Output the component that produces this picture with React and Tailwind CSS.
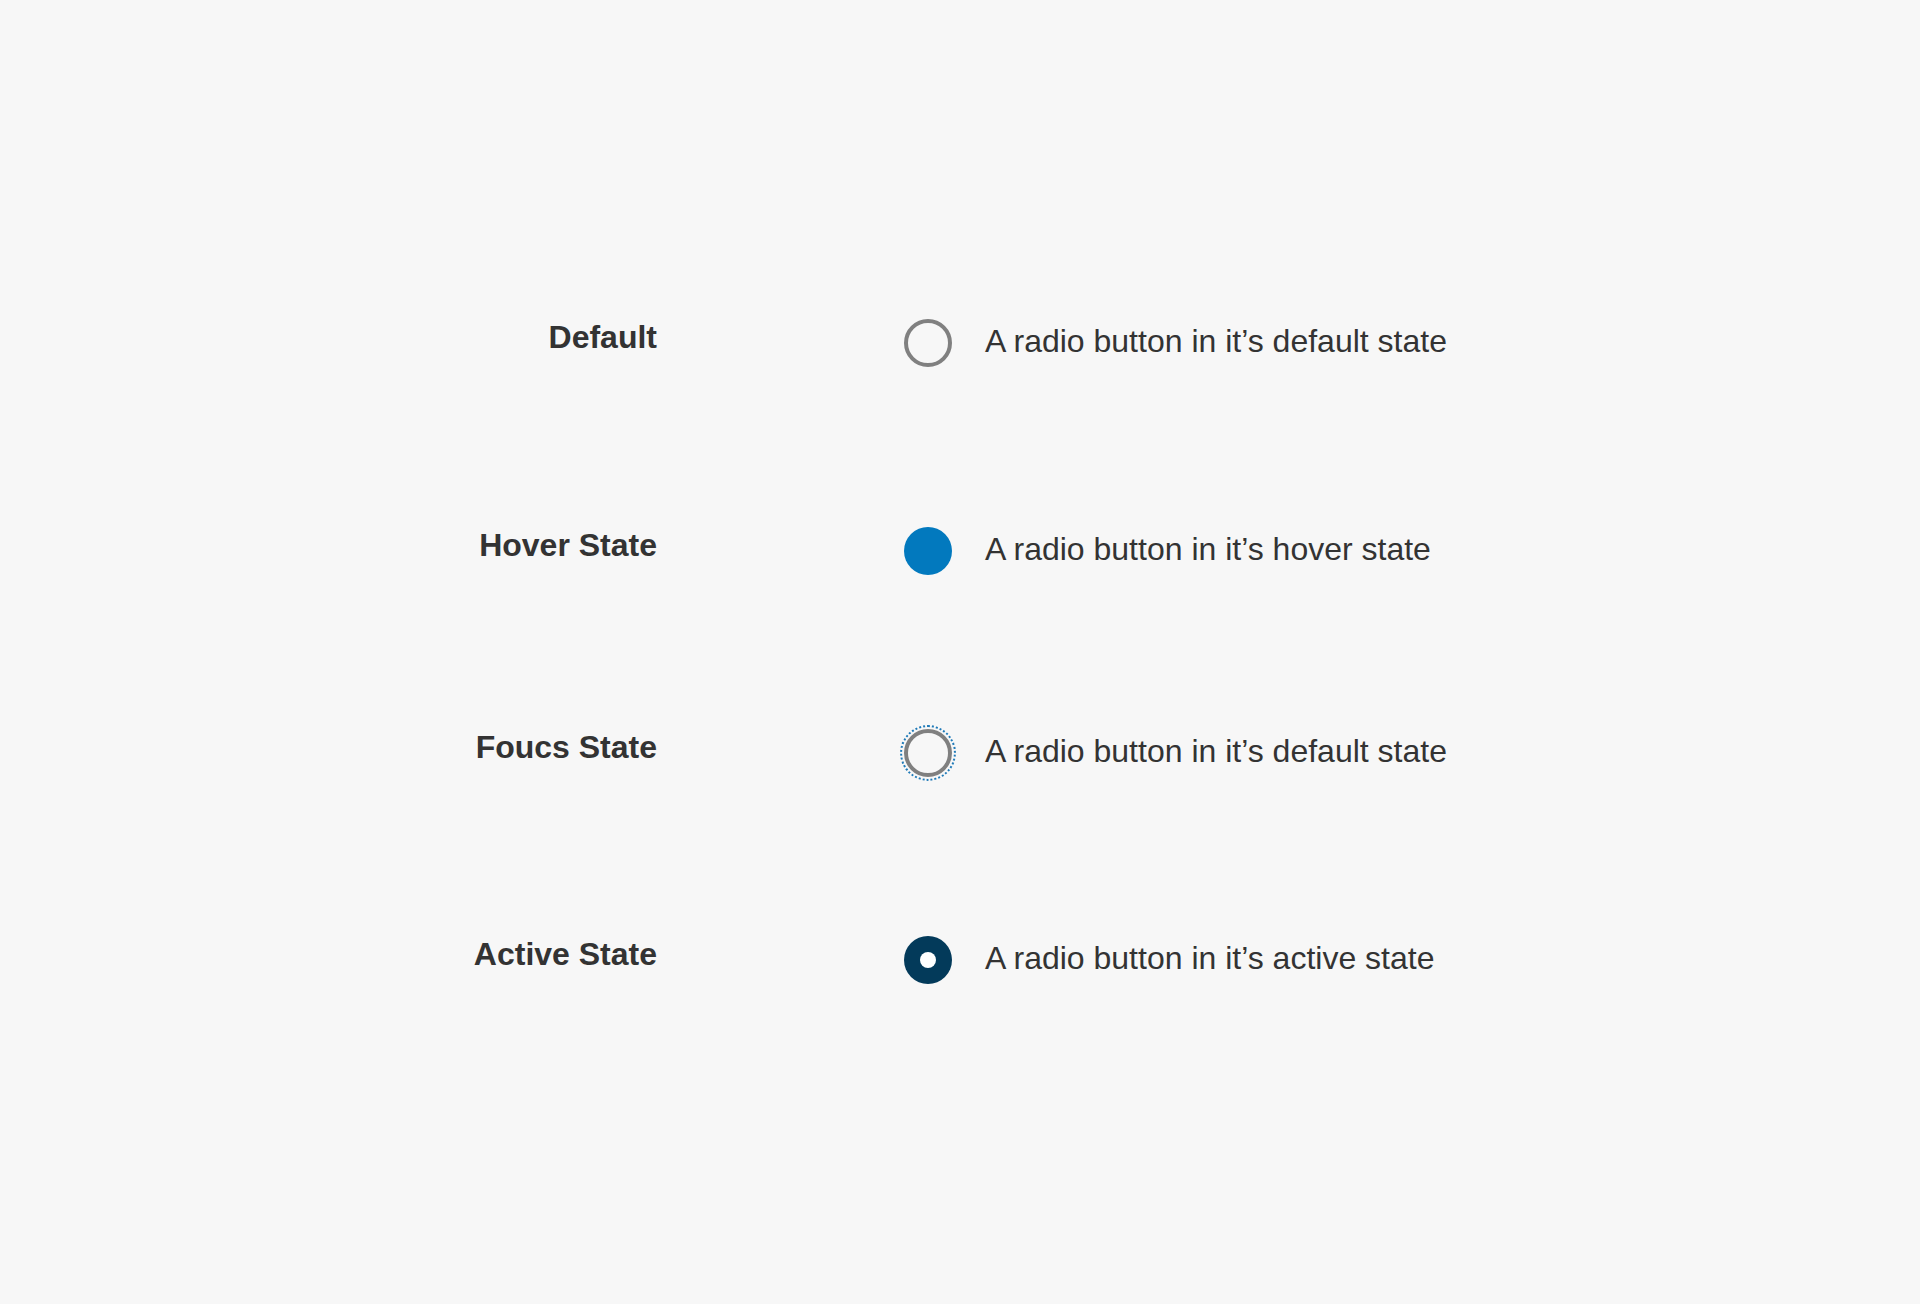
import React from 'react';

const rows = [
  { label: 'Default', text: 'A radio button in it’s default state', kind: 'default', mt: 'mt-0' },
  { label: 'Hover State', text: 'A radio button in it’s hover state', kind: 'hover', mt: 'mt-[160px]' },
  { label: 'Foucs State', text: 'A radio button in it’s default state', kind: 'focus', mt: 'mt-[154px]' },
  { label: 'Active State', text: 'A radio button in it’s active state', kind: 'active', mt: 'mt-[159px]' },
];

const Radio = ({ kind }) => {
  if (kind === 'hover') {
    return <span className="block w-[48px] h-[48px] rounded-full bg-[#0279be]" />;
  }
  if (kind === 'active') {
    return (
      <span className="flex items-center justify-center w-[48px] h-[48px] rounded-full bg-[#033a5a]">
        <span className="block w-[16px] h-[16px] rounded-full bg-white" />
      </span>
    );
  }
  if (kind === 'focus') {
    return (
      <span className="block w-[48px] h-[48px] rounded-full border-4 border-[#808080] outline-2 outline-dotted outline-[#1f7ab8] outline-offset-[2px]" />
    );
  }
  return <span className="block w-[48px] h-[48px] rounded-full border-4 border-[#808080]" />;
};

export default function App() {
  return (
    <div className="min-h-[1304px] w-full bg-[#f7f7f7] pt-[319px] text-[#333333] font-['Liberation_Sans',Arial,sans-serif]">
      <div className="flex flex-col">
        {rows.map((row) => (
          <div key={row.label} className={`flex items-center h-[48px] ${row.mt}`}>
            <div className="w-[657px] text-right text-[32px] font-bold leading-none -mt-[12px]">
              {row.label}
            </div>
            <div className="ml-[247px] shrink-0">
              <Radio kind={row.kind} />
            </div>
            <div className="ml-[33px] text-[32px] leading-none -mt-[4px]">{row.text}</div>
          </div>
        ))}
      </div>
    </div>
  );
}
